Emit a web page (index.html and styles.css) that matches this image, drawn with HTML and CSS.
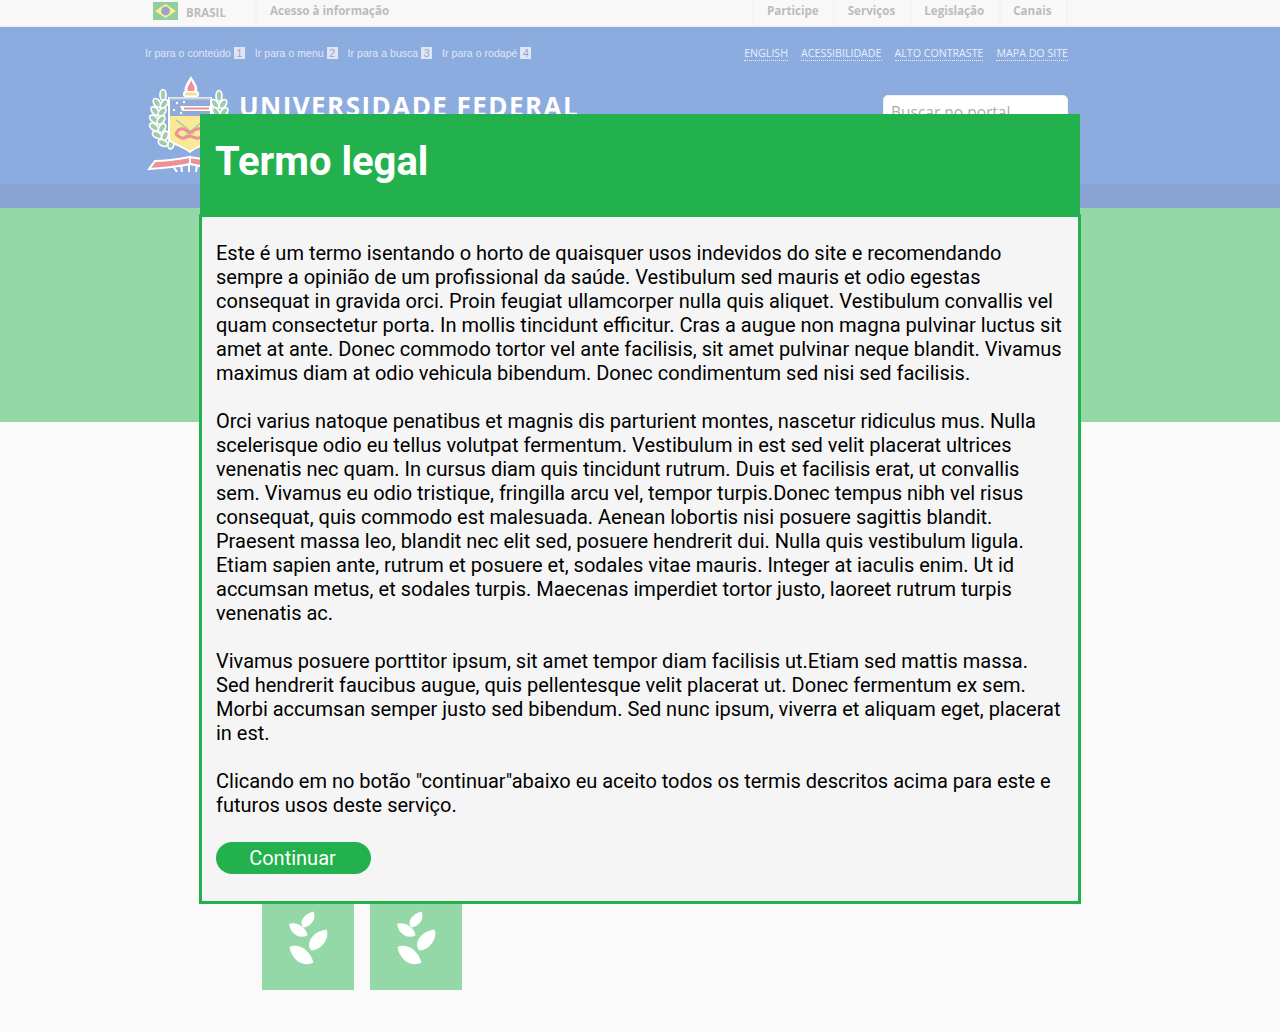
FILE: index.html
```html
<!DOCTYPE html>
<html lang="pt-BR">
<head>
    <meta charset="UTF-8">
    <meta name="viewport" content="width=device-width, initial-scale=1.0">
    <title>Termo legal</title>
    <link rel="stylesheet" href="styles.css">
</head>
<body>

<div class="barra-brasil">
    <div class="wrap barra-inner">
        <a class="brasil" href="#">
            <svg class="flag" width="25" height="18" viewBox="0 0 25 18">
                <rect width="25" height="18" fill="#229e45"/>
                <path d="M12.500 2 L23 9 L12.500 16 L2 9 Z" fill="#f8e509"/>
                <circle cx="12.500" cy="9" r="4.400" fill="#2b49a3"/>
            </svg>
            <span>BRASIL</span>
        </a>
        <a class="acesso" href="#">Acesso à informação</a>
        <ul class="barra-menu">
            <li>Participe</li>
            <li>Serviços</li>
            <li>Legislação</li>
            <li>Canais</li>
        </ul>
    </div>
</div>

<header class="portal-header">
    <div class="wrap">
        <div class="acc-row">
            <ul class="atalhos">
                <li>Ir para o conteúdo <b>1</b></li>
                <li>Ir para o menu <b>2</b></li>
                <li>Ir para a busca <b>3</b></li>
                <li>Ir para o rodapé <b>4</b></li>
            </ul>
            <ul class="acessibilidade">
                <li>English</li>
                <li>Acessibilidade</li>
                <li>Alto Contraste</li>
                <li>Mapa do Site</li>
            </ul>
        </div>
        <div class="logo-row">
            <div class="logo">
                <svg class="brasao" width="84" height="96" viewBox="0 0 84 96">
                    <!-- torch -->
                    <path d="M39 18 C35 12 40 7 44 0 C47 6 53 11 49 18 Z" fill="#fff"/>
                    <path d="M41 15 C39 11 43 9 44 4 C46 9 49 11 47 15 Z" fill="#d8232a"/>
                    <rect x="36" y="15" width="16" height="6" rx="2.500" fill="#fff"/>
                    <rect x="38" y="16.500" width="12" height="3" rx="1.500" fill="#e8c11c"/>
                    <!-- left wreath -->
                    <g fill="#3c9a53" stroke="#fff" stroke-width="1.700">
                        <ellipse cx="16" cy="19" rx="3" ry="5.500"/>
                        <ellipse cx="10" cy="27" rx="3" ry="5" transform="rotate(-35 10 27)"/>
                        <ellipse cx="17" cy="28" rx="3" ry="5" transform="rotate(35 17 28)"/>
                        <ellipse cx="8" cy="35" rx="3" ry="5" transform="rotate(-40 8 35)"/>
                        <ellipse cx="15" cy="36" rx="3" ry="5" transform="rotate(40 15 36)"/>
                        <ellipse cx="7" cy="43" rx="3" ry="5" transform="rotate(-50 7 43)"/>
                        <ellipse cx="14" cy="44" rx="3" ry="5" transform="rotate(40 14 44)"/>
                        <ellipse cx="7" cy="51" rx="3" ry="5" transform="rotate(-55 7 51)"/>
                        <ellipse cx="15" cy="52" rx="3" ry="5" transform="rotate(30 15 52)"/>
                        <ellipse cx="10" cy="59" rx="3" ry="5" transform="rotate(-60 10 59)"/>
                        <ellipse cx="18" cy="60" rx="3" ry="5" transform="rotate(20 18 60)"/>
                        <ellipse cx="16" cy="67" rx="3" ry="5" transform="rotate(-65 16 67)"/>
                        <ellipse cx="24" cy="68" rx="3" ry="5" transform="rotate(10 24 68)"/>
                    </g>
                    <!-- right wreath -->
                    <g fill="#3c9a53" stroke="#fff" stroke-width="1.700">
                        <ellipse cx="72" cy="20" rx="3" ry="5.500"/>
                        <ellipse cx="68" cy="28" rx="3" ry="5" transform="rotate(-35 68 28)"/>
                        <ellipse cx="76" cy="28" rx="3" ry="5" transform="rotate(35 76 28)"/>
                        <ellipse cx="69" cy="36" rx="3" ry="5" transform="rotate(-35 69 36)"/>
                        <ellipse cx="77" cy="36" rx="3" ry="5" transform="rotate(40 77 36)"/>
                    </g>
                    <!-- shield -->
                    <path d="M21 21 H65 V62 C65 68 52 70 43 77 C34 70 21 68 21 62 Z" fill="#fff"/>
                    <path d="M23 23 H63 V40 H23 Z" fill="#1f57b5"/>
                    <path d="M23 40 H63 V62 C63 66 51 69 43 75 C35 69 23 66 23 62 Z" fill="#f4d42c"/>
                    <rect x="22" y="21.500" width="42" height="2" fill="#9aa6b5"/>
                    <circle cx="30" cy="27" r="1.200" fill="#fff"/>
                    <circle cx="37" cy="26" r="1.200" fill="#fff"/>
                    <circle cx="27" cy="34" r="1.200" fill="#fff"/>
                    <circle cx="34" cy="37" r="1.200" fill="#fff"/>
                    <path d="M33 30 H64 V35 H35 Z" fill="#fff"/>
                    <path d="M37 32.500 H62" stroke="#d8232a" stroke-width="2"/>
                    <path d="M29 44 L47 58 M57 44 L36 62" stroke="#3c9a53" stroke-width="1.500"/>
                    <path d="M29 58 C33 48 40 55 43 57 C46 55 54 48 58 58 C50 66 46 60 43 60 C40 60 36 66 29 58 Z" fill="none" stroke="#d8232a" stroke-width="3"/>
                    <!-- ribbon -->
                    <path d="M2 93 L8 85 C20 85 32 83 43 81 L43 88 C30 91 16 92 2 93 Z" fill="#d8232a" stroke="#fff" stroke-width="2"/>
                    <path d="M43 81 C55 83 66 85 78 85 L84 93 C70 92 56 91 43 88 Z" fill="#d8232a" stroke="#fff" stroke-width="2"/>
                    <path d="M26 90 L30 96 M34 89 L35 96 M42 89 L42 96 M50 89 L49 96" stroke="#fff" stroke-width="2"/>
                </svg>
                <div class="logo-nome">UNIVERSIDADE FEDERAL</div>
            </div>
            <div class="busca">Buscar no portal</div>
        </div>
    </div>
    <div class="header-band"></div>
</header>

<section class="hero"></section>

<main class="wrap-tiles">
    <div class="tile">
        <svg class="wheat" width="40" height="54" viewBox="0 0 40 54">
            <use href="#wheat-leaves"/>
        </svg>
    </div>
    <div class="tile">
        <svg class="wheat" width="40" height="54" viewBox="0 0 40 54">
            <use href="#wheat-leaves"/>
        </svg>
    </div>
</main>

<svg class="defs" width="0" height="0">
    <defs>
        <g id="wheat-leaves" fill="#fff">
            <path d="M24.500 0.500 C28 8 21.500 15.500 14.500 16.500 C9.500 12 14 3 24.500 0.500 Z"/>
            <path d="M0 13 C7 10.500 17 15.500 18.500 24.500 C9 28.500 1.500 22 0 13 Z"/>
            <path d="M37.500 18.500 C41 27 33 39 22.500 39.500 C16 33 23 20.500 37.500 18.500 Z"/>
            <path d="M0.500 36 C9 31.500 21 38.500 24.500 51.500 C13 57 2.500 48 0.500 36 Z"/>
        </g>
    </defs>
</svg>

<div class="overlay"></div>

<div class="modal">
    <div class="modal-head">
        <h1>Termo legal</h1>
    </div>
    <div class="modal-body">
        <p>Este é um termo isentando o horto de quaisquer usos indevidos do site e recomendando sempre a opinião de um profissional da saúde. Vestibulum sed mauris et odio egestas consequat in gravida orci. Proin feugiat ullamcorper nulla quis aliquet. Vestibulum convallis vel quam consectetur porta. In mollis tincidunt efficitur. Cras a augue non magna pulvinar luctus sit amet at ante. Donec commodo tortor vel ante facilisis, sit amet pulvinar neque blandit. Vivamus maximus diam at odio vehicula bibendum. Donec condimentum sed nisi sed facilisis.</p>
        <p>Orci varius natoque penatibus et magnis dis parturient montes, nascetur ridiculus mus. Nulla scelerisque odio eu tellus volutpat fermentum. Vestibulum in est sed velit placerat ultrices venenatis nec quam. In cursus diam quis tincidunt rutrum. Duis et facilisis erat, ut convallis sem. Vivamus eu odio tristique, fringilla arcu vel, tempor turpis.Donec tempus nibh vel risus consequat, quis commodo est malesuada. Aenean lobortis nisi posuere sagittis blandit. Praesent massa leo, blandit nec elit sed, posuere hendrerit dui. Nulla quis vestibulum ligula. Etiam sapien ante, rutrum et posuere et, sodales vitae mauris. Integer at iaculis enim. Ut id accumsan metus, et sodales turpis. Maecenas imperdiet tortor justo, laoreet rutrum turpis venenatis ac.</p>
        <p>Vivamus posuere porttitor ipsum, sit amet tempor diam facilisis ut.Etiam sed mattis massa. Sed hendrerit faucibus augue, quis pellentesque velit placerat ut. Donec fermentum ex sem. Morbi accumsan semper justo sed bibendum. Sed nunc ipsum, viverra et aliquam eget, placerat in est.</p>
        <p>Clicando em no botão "continuar"abaixo eu aceito todos os termis descritos acima para este e futuros usos deste serviço.</p>
        <button class="btn-continuar">Continuar</button>
    </div>
</div>

</body>
</html>
```

FILE: styles.css
```css
* {
    box-sizing: border-box;
}

html, body {
    height: 100%;
}

body {
    margin: 0;
    background-color: #f5f5f5;
    font-family: 'Open Sans', sans-serif;
    overflow: hidden;
}

ul {
    list-style: none;
    margin: 0;
    padding: 0;
}

a {
    text-decoration: none;
    color: inherit;
}

.wrap {
    width: 923px;
    margin-left: 145px;
}

/* barra do governo */
.barra-brasil {
    height: 27px;
    background-color: #f1f1f1;
    border-bottom: 1px solid #dfdfdf;
    color: #777;
    font-size: 11.600px;
    font-weight: 700;
    line-height: 21px;
}

.barra-inner {
    display: flex;
    height: 26px;
}

.brasil {
    display: flex;
    align-items: flex-start;
    width: 112px;
    padding: 2px 0 0 8px;
    border-right: 2px solid #e8e8e8;
    font-size: 11.500px;
}

.flag {
    margin-right: 8px;
}

.acesso {
    margin-left: 13px;
}

.barra-menu {
    display: flex;
    margin-left: auto;
}

.barra-menu li {
    padding: 0 14.500px 0 12.500px;
    border-left: 2px solid #e8e8e8;
}

.barra-menu li:last-child {
    border-right: 2px solid #e8e8e8;
}

/* cabecalho */
.portal-header {
    height: 181px;
    background-color: #1957bf;
}

.acc-row {
    display: flex;
    justify-content: space-between;
    padding-top: 20px;
    height: 49px;
}

.atalhos {
    display: flex;
    gap: 10px;
    font-family: 'Liberation Sans', Arial, sans-serif;
    font-size: 10.600px;
    color: #fff;
    opacity: 0.7;
}

.atalhos b {
    display: inline-block;
    padding: 0 2.500px;
    background-color: #fff;
    color: #444;
    font-weight: 400;
    line-height: 12px;
}

.acessibilidade {
    display: flex;
    gap: 13px;
    margin-top: -1px;
    font-size: 10.650px;
    color: #fff;
    text-transform: uppercase;
    opacity: 0.8;
}

.acessibilidade li {
    border-bottom: 1px dotted #fff;
    line-height: 14px;
    height: 15px;
}

.logo-row {
    display: flex;
    justify-content: space-between;
    height: 108px;
}

.logo {
    display: flex;
    align-items: flex-start;
}

.brasao {
    margin-left: 2px;
}

.logo-nome {
    margin: 15px 0 0 8px;
    font-size: 26px;
    font-weight: 700;
    letter-spacing: 1.450px;
    line-height: 30px;
    color: #fff;
    white-space: nowrap;
}

.busca {
    width: 185px;
    height: 40px;
    margin-top: 19px;
    padding: 5px 7px;
    background-color: #fff;
    border: 1px solid #e4e4e4;
    border-radius: 5px;
    font-size: 15.500px;
    color: #555;
}

.header-band {
    height: 24px;
    background-color: #1747a7;
}

.hero {
    height: 214px;
    background-color: #2bb14f;
}

.wrap-tiles {
    display: flex;
    gap: 16px;
    padding: 476px 0 0 262px;
}

.tile {
    display: flex;
    align-items: flex-start;
    justify-content: center;
    width: 92px;
    height: 92px;
    padding-top: 13px;
    background-color: #2bb14f;
}

.wheat {
    margin-left: 2px;
}

.defs {
    position: absolute;
}

/* modal */
.overlay {
    position: fixed;
    top: 0;
    left: 0;
    right: 0;
    bottom: 0;
    background-color: rgba(255, 255, 255, 0.5);
}

.modal {
    position: fixed;
    top: 114px;
    left: 199px;
    width: 882px;
    color: #000;
    font-family: Roboto, sans-serif;
}

.modal-head {
    height: 100px;
    margin: 0 1px;
    padding: 23px 15px 0;
    background-color: #22b14c;
}

.modal-head h1 {
    margin: 0;
    font-size: 40px;
    font-weight: 700;
    line-height: 50px;
    color: #fff;
}

.modal-body {
    height: 690px;
    padding: 24px 14px 0;
    background-color: #f5f5f5;
    border: 3px solid #22b14c;
    font-size: 20px;
    line-height: 24px;
}

.modal-body p {
    margin: 0 0 24px;
}

.btn-continuar {
    display: block;
    width: 155px;
    height: 32px;
    margin-top: 25px;
    padding: 0 2px 0 0;
    background-color: #22b14c;
    color: #fff;
    border: none;
    border-radius: 16px;
    font-family: Roboto, sans-serif;
    font-size: 20px;
    font-weight: 400;
}
```
